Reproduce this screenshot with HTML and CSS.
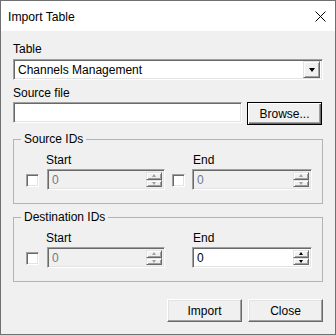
FILE: index.html
```html
<!DOCTYPE html>
<html>
<head>
<meta charset="utf-8">
<link rel="stylesheet" href="styles.css">
</head>
<body>
<div class="window">
  <div class="titlebar">
    <span class="title">Import Table</span>
    <svg class="close" width="11" height="11" viewBox="0 0 11 11"><path d="M0.5 0.5 L10.5 10.5 M10.5 0.5 L0.5 10.5" stroke="#000" stroke-width="1" fill="none"/></svg>
  </div>
  <div class="client">
    <div class="label lbl-table">Table</div>
    <div class="combo sunken">
      <span class="combo-text">Channels Management</span>
      <span class="drop raised"><span class="arrow-down"></span></span>
    </div>
    <div class="label lbl-src">Source file</div>
    <div class="file-row">
      <div class="textbox sunken"></div>
      <button class="btn default"><span class="btn-in">Browse...</span></button>
    </div>

    <fieldset class="group g-src">
      <legend>Source IDs</legend>
      <div class="ids">
        <span></span><span class="label">Start</span><span></span><span class="label">End</span>
        <span class="check sunken"></span>
        <div class="spin sunken disabled"><span class="spin-val">0</span><span class="spin-btns"><span class="sb raised"><span class="ar up"></span></span><span class="sb raised"><span class="ar dn"></span></span></span></div>
        <span class="check sunken"></span>
        <div class="spin sunken disabled"><span class="spin-val">0</span><span class="spin-btns"><span class="sb raised"><span class="ar up"></span></span><span class="sb raised"><span class="ar dn"></span></span></span></div>
      </div>
    </fieldset>

    <fieldset class="group g-dst">
      <legend>Destination IDs</legend>
      <div class="ids">
        <span></span><span class="label">Start</span><span></span><span class="label">End</span>
        <span class="check sunken"></span>
        <div class="spin sunken disabled"><span class="spin-val">0</span><span class="spin-btns"><span class="sb raised"><span class="ar up"></span></span><span class="sb raised"><span class="ar dn"></span></span></span></div>
        <span class="nocheck"></span>
        <div class="spin sunken"><span class="spin-val">0</span><span class="spin-btns"><span class="sb raised"><span class="ar up"></span></span><span class="sb raised"><span class="ar dn"></span></span></span></div>
      </div>
    </fieldset>

    <div class="actions">
      <button class="btn"><span class="btn-in">Import</span></button>
      <button class="btn"><span class="btn-in">Close</span></button>
    </div>
  </div>
</div>
</body>
</html>
```
FILE: styles.css
```css
* { box-sizing: border-box; }
html, body { margin: 0; padding: 0; background: #f0f0f0; }
body { font-family: "Liberation Sans", Arial, sans-serif; font-size: 12px; color: #000; }

.window {
  width: 336px;
  height: 335px;
  border: 1px solid #707070;
  background: #f0f0f0;
  display: flex;
  flex-direction: column;
}

.titlebar {
  height: 30px;
  background: #fff;
  display: flex;
  align-items: center;
  padding-left: 7px;
  padding-right: 9px;
  justify-content: space-between;
}
.title { line-height: 14px; padding-top: 2px; font-size: 12.2px; }
.close { display: block; margin-top: 1px; }

.client { padding: 0 12px; display: flex; flex-direction: column; }

.label { line-height: 14px; height: 14px; white-space: nowrap; }
.lbl-table { margin-top: 11px; }
.lbl-src { margin-top: 6px; }

.sunken {
  border: 1px solid;
  border-color: #a0a0a0 #fff #fff #a0a0a0;
  box-shadow: inset 1px 1px 0 #696969, inset -1px -1px 0 #e3e3e3;
}
.raised {
  border: 1px solid;
  border-color: #e3e3e3 #696969 #696969 #e3e3e3;
  box-shadow: inset 1px 1px 0 #fff, inset -1px -1px 0 #a0a0a0;
  background: #f0f0f0;
}

.combo {
  margin-top: 3px;
  height: 21px;
  background: #fff;
  display: flex;
  align-items: center;
  padding: 2px;
}
.combo-text { flex: 1; padding-left: 2px; line-height: 14px; }
.drop {
  width: 17px;
  height: 17px;
  display: flex;
  align-items: center;
  justify-content: center;
}
.arrow-down {
  width: 0; height: 0;
  border-left: 3.5px solid transparent;
  border-right: 3.5px solid transparent;
  border-top: 4px solid #000;
  margin-top: 1px;
}

.file-row { margin-top: 2px; display: flex; align-items: flex-start; }
.textbox { width: 229px; height: 21px; background: #fff; }

.btn {
  font: inherit;
  color: #000;
  margin: 0;
  padding: 0;
  width: 75px;
  height: 23px;
  background: #f0f0f0;
  border: 1px solid;
  border-color: #fff #696969 #696969 #fff;
  box-shadow: inset -1px -1px 0 #a0a0a0, inset 1px 1px 0 #e3e3e3;
  display: flex;
  align-items: center;
  justify-content: center;
}
.btn-in { line-height: 14px; padding-top: 1px; }
.file-row .btn { margin-left: 5px; }
.btn.default {
  border: 1px solid #000;
  box-shadow: inset 1px 1px 0 #fff, inset -1px -1px 0 #696969, inset -2px -2px 0 #a0a0a0;
}

.group {
  margin: 7px 0 0 0;
  padding: 6px 0 13px 12px;
  border: 1px solid #b4b4b4;
  min-width: 0;
}
.group legend {
  padding: 0 3px;
  margin-left: -5px;
  line-height: 15px;
}
.g-dst { margin-top: 6px; }

.ids {
  display: grid;
  grid-template-columns: 13px 118px 13px 118px;
  grid-template-rows: 14px 21px;
  column-gap: 8px;
  row-gap: 2px;
  align-items: center;
}
.ids > .label { margin-left: -1px; }

.check { width: 13px; height: 13px; background: #fff; display: block; margin-top: 1px; }
.ids > .check:nth-child(7) { margin-left: -1px; }

.spin {
  height: 21px;
  background: #fff;
  display: flex;
  align-items: stretch;
  padding: 2px;
}
.ids > .spin:nth-child(8) { margin-left: -2px; }
.spin.disabled { background: #f0f0f0; }
.spin-val { flex: 1; line-height: 17px; padding-left: 2px; }
.spin.disabled .spin-val { color: #6d7a8a; }
.spin-btns { width: 16px; display: flex; flex-direction: column; }
.sb { flex: 1; display: flex; align-items: center; justify-content: center; }
.ar { width: 0; height: 0; border-left: 2.5px solid transparent; border-right: 2.5px solid transparent; }
.ar.up { border-bottom: 3px solid #000; }
.ar.dn { border-top: 3px solid #000; }
.spin.disabled .ar.up { border-bottom-color: #a0a0a0; }
.spin.disabled .ar.dn { border-top-color: #a0a0a0; }

.actions {
  margin-top: 17px;
  display: flex;
  justify-content: flex-end;
  gap: 6px;
}
```
